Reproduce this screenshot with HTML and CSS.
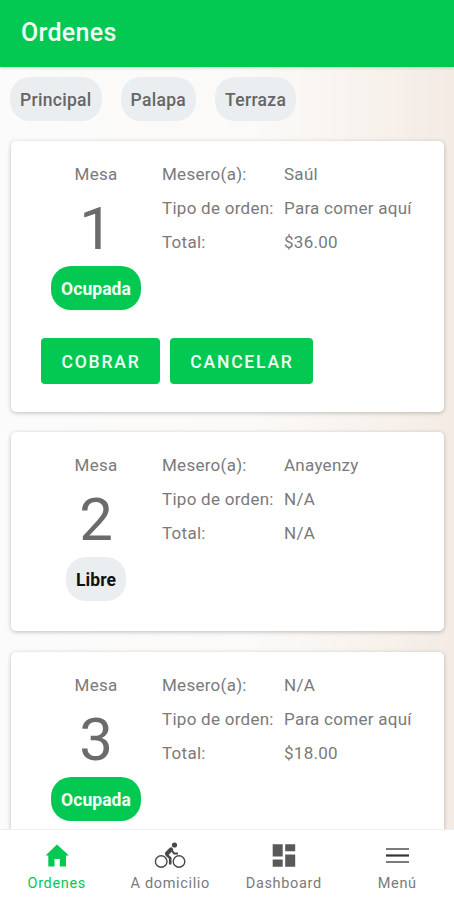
FILE: index.html
```html
<!DOCTYPE html>
<html lang="es">
<head>
<meta charset="utf-8">
<meta name="viewport" content="width=device-width, initial-scale=1">
<title>Ordenes</title>
<link rel="stylesheet" href="styles.css">
</head>
<body>
<div class="app">
  <header class="app-bar"><h1 class="app-title">Ordenes</h1></header>
  <main class="content">
    <div class="chips">
      <span class="chip">Principal</span>
      <span class="chip">Palapa</span>
      <span class="chip">Terraza</span>
    </div>
    <article class="card card-actions">
      <div class="order">
        <div class="table">
          <span class="label">Mesa</span>
          <span class="number">1</span>
          <span class="status busy">Ocupada</span>
        </div>
        <dl class="details">
          <dt>Mesero(a):</dt><dd>Saúl</dd>
          <dt>Tipo de orden:</dt><dd>Para comer aquí</dd>
          <dt>Total:</dt><dd>$36.00</dd>
        </dl>
      </div>
      <div class="buttons">
        <button class="button pay">COBRAR</button>
        <button class="button cancel">CANCELAR</button>
      </div>
    </article>
    <article class="card">
      <div class="order">
        <div class="table">
          <span class="label">Mesa</span>
          <span class="number">2</span>
          <span class="status free">Libre</span>
        </div>
        <dl class="details">
          <dt>Mesero(a):</dt><dd>Anayenzy</dd>
          <dt>Tipo de orden:</dt><dd>N/A</dd>
          <dt>Total:</dt><dd>N/A</dd>
        </dl>
      </div>
    </article>
    <article class="card card-actions">
      <div class="order">
        <div class="table">
          <span class="label">Mesa</span>
          <span class="number">3</span>
          <span class="status busy">Ocupada</span>
        </div>
        <dl class="details">
          <dt>Mesero(a):</dt><dd>N/A</dd>
          <dt>Tipo de orden:</dt><dd>Para comer aquí</dd>
          <dt>Total:</dt><dd>$18.00</dd>
        </dl>
      </div>
    </article>
  </main>
  <nav class="tabs">
    <a class="tab active">
      <svg class="icon" viewBox="0 0 32 28"><path d="M16 2.500 28 13.500H25V24.500H18.800V17H13.500V24.500H7.300V13.500H4.500Z" fill="currentColor"/></svg>
      <span>Ordenes</span>
    </a>
    <a class="tab">
      <svg class="icon" viewBox="0 0 32 28"><g fill="none" stroke="#484848"><circle cx="7.200" cy="19.500" r="5.800" stroke-width="1.400"/><circle cx="25" cy="19.500" r="5.800" stroke-width="1.400"/><path d="M17 7.500 13 11.500" stroke-width="4.200" stroke-linecap="round"/><path d="M12.200 12.500 16.200 16V22.500" stroke-width="2.600"/><path d="M18 8.500 20 11.500H24" stroke-width="1.900"/></g><circle cx="20.500" cy="3" r="2.600" fill="#484848"/></svg>
      <span>A domicilio</span>
    </a>
    <a class="tab">
      <svg class="icon" viewBox="0 0 32 28"><path d="M4.700 2.200H14.700V14.500H4.700ZM17.200 2.200H27.200V9.300H17.200ZM4.700 17.500H14.700V24.800H4.700ZM17.200 12.500H27.200V24.800H17.200Z" fill="#595959"/></svg>
      <span>Dashboard</span>
    </a>
    <a class="tab">
      <svg class="icon" viewBox="0 0 32 28"><path d="M5 7H28M5 20H28" stroke="#7b7b7b" stroke-width="2.200"/><path d="M5 13.500H28" stroke="#333" stroke-width="2.200"/></svg>
      <span>Menú</span>
    </a>
  </nav>
</div>
</body>
</html>
```
FILE: styles.css
```css
* { box-sizing: border-box; }
body {
  margin: 0;
  font-family: Roboto, "Liberation Sans", sans-serif;
  color: #7a7a7a;
}
.app {
  height: 900px;
  display: flex;
  flex-direction: column;
  overflow: hidden;
  background: linear-gradient(90deg, #fbfbfb 0%, #fbfaf8 55%, #f8f2ed 82%, #f3ebe4 100%);
}
.app-bar {
  height: 67px;
  flex: none;
  padding: 0 21px 2px;
  display: flex;
  align-items: center;
  background: #03c953;
  box-shadow: 0 1px 3px rgba(0, 0, 0, .16);
}
.app-title {
  margin: 0;
  font-size: 25px;
  font-weight: 500;
  letter-spacing: .3px;
  color: #f2fff4;
}
.content {
  flex: 1;
  min-height: 0;
  overflow: hidden;
  padding: 10px 10px 0 11px;
}
.chips { display: flex; gap: 19px; margin-left: -1px; }
.chip, .status {
  height: 44px;
  padding: 2px 10px 0;
  border-radius: 20px;
  display: flex;
  align-items: center;
  background: #ebeef1;
  font-size: 17.500px;
  font-weight: 500;
  letter-spacing: .3px;
  color: #666;
}
.card {
  height: 199px;
  margin-top: 21px;
  padding: 20px 29px;
  border-radius: 5px;
  background: #fff;
  box-shadow: 0 1px 4px rgba(0, 0, 0, .25);
}
.card-actions { height: 271px; }
.chips + .card,
.card-actions + .card { margin-top: 20px; }
.order { display: flex; }
.table {
  width: 112px;
  flex: none;
  display: flex;
  flex-direction: column;
  align-items: center;
  line-height: 27px;
}
.label, .details { font-size: 17px; letter-spacing: .27px; }
.number {
  height: 78px;
  padding-top: 3px;
  font-size: 60px;
  line-height: 76px;
  color: #6b6b6b;
}
.status { font-weight: 700; letter-spacing: .05px; }
.busy { background: #03c953; color: #f2fff4; }
.free { background: #ebeef1; color: #111; }
.details {
  margin: 0 0 0 10px;
  display: grid;
  grid-template-columns: 122px 1fr;
  grid-auto-rows: 34px;
  line-height: 27px;
  white-space: nowrap;
}
.details dd { margin: 0; }
.buttons { display: flex; gap: 10px; margin: 28px 0 0 1px; }
.button {
  height: 46px;
  padding: 1px 0 0 1px;
  border: 0;
  border-radius: 4px;
  background: #03c953;
  color: #f2fff4;
  font: 500 17.500px Roboto, sans-serif;
  letter-spacing: 1.800px;
}
.pay { width: 119px; }
.cancel { width: 143px; }
.tabs {
  height: 71px;
  flex: none;
  display: grid;
  grid-template-columns: repeat(4, 1fr);
  background: #fff;
  border-top: 1px solid #eee;
}
.tab {
  padding-top: 12px;
  display: flex;
  flex-direction: column;
  align-items: center;
  font-size: 14.500px;
  letter-spacing: .65px;
  line-height: 20px;
}
.tab span { margin-top: 4px; }
.icon { width: 32px; height: 28px; }
.active { color: #03c953; }
```
